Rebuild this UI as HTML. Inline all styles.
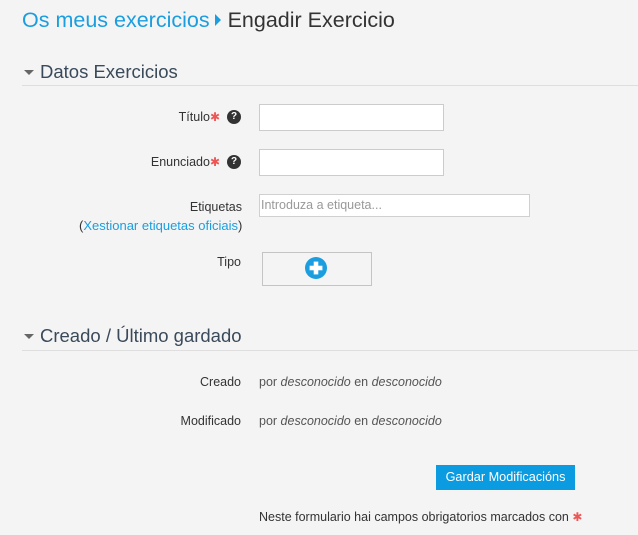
<!DOCTYPE html>
<html><head><meta charset="utf-8"><style>
body{margin:0;background:#f4f4f4;width:638px;height:535px;overflow:hidden;font-family:"Liberation Sans",sans-serif;font-size:12.5px;color:#333;position:relative}
.a{position:absolute;white-space:nowrap}
.r{text-align:right}
.h1{font-size:21.5px;top:8px;left:22px;color:#333}
.h1 .l{color:#1a9ee0}
.sec{font-size:18.5px;color:#3a4a5a;left:40px}
.tri{position:absolute;width:0;height:0;border-left:5px solid transparent;border-right:5px solid transparent;border-top:5px solid #666}
.line{position:absolute;left:22px;right:0;height:1px;background:#dedede}
.inp{position:absolute;background:#fff;border:1px solid #ccc;box-sizing:border-box}
.star{color:#e55;font-size:12px}
.q{position:absolute;width:14px;height:14px;border-radius:50%;background:#333;color:#fff;font-size:10px;font-weight:bold;text-align:center;line-height:14px}
</style></head><body>
<div class="a h1"><span class="l">Os meus exercicios</span><span style="display:inline-block;width:0;height:0;border-top:6px solid transparent;border-bottom:6px solid transparent;border-left:6px solid #1a9ee0;margin:0 7px 0 5px;vertical-align:1px"></span>Engadir Exercicio</div>

<div class="tri" style="left:24px;top:70px"></div>
<div class="a sec" style="top:61px">Datos Exercicios</div>
<div class="line" style="top:85px"></div>

<div class="a r" style="right:418px;top:110px">Título<span class="star">✱</span></div>
<div class="q" style="left:227px;top:110px">?</div>
<div class="inp" style="left:259px;top:104px;width:185px;height:27px"></div>

<div class="a r" style="right:418px;top:155px">Enunciado<span class="star">✱</span></div>
<div class="q" style="left:227px;top:155px">?</div>
<div class="inp" style="left:259px;top:149px;width:185px;height:27px"></div>

<div class="a r" style="right:396px;top:200px">Etiquetas</div>
<div class="a" style="left:79px;top:218px;color:#1a9ee0;font-size:13px"><span style="color:#333">(</span>Xestionar etiquetas oficiais<span style="color:#333">)</span></div>
<div class="inp" style="left:259px;top:194px;width:271px;height:23px;color:#999;padding:3px 1px;font-size:12.5px;border-color:#d0d0d0">Introduza a etiqueta...</div>

<div class="a r" style="right:397px;top:255px">Tipo</div>
<div class="inp" style="left:262px;top:252px;width:110px;height:34px;background:#f4f4f4;border-color:#c4c4c4"></div>
<svg class="a" style="left:305px;top:257px" width="22" height="22" viewBox="0 0 24 24"><circle cx="12" cy="12" r="12" fill="#1a9ee0"/><rect x="9.5" y="5" width="5" height="14" fill="#fff"/><rect x="5" y="9.5" width="14" height="5" fill="#fff"/></svg>

<div class="tri" style="left:24px;top:334px"></div>
<div class="a sec" style="top:325px">Creado / Último gardado</div>
<div class="line" style="top:350px"></div>

<div class="a r" style="right:397px;top:375px">Creado</div>
<div class="a" style="left:259px;top:375px;color:#555">por <i>desconocido</i> en <i>desconocido</i></div>
<div class="a r" style="right:397px;top:414px">Modificado</div>
<div class="a" style="left:259px;top:414px;color:#555">por <i>desconocido</i> en <i>desconocido</i></div>

<div class="a" style="left:436px;top:465px;width:139px;height:25px;background:#0a9be0;color:#fff;text-align:center;line-height:25px;font-size:12.7px">Gardar Modificacións</div>
<div class="a" style="left:259px;top:510px">Neste formulario hai campos obrigatorios marcados con <span class="star">✱</span></div>
</body></html>
